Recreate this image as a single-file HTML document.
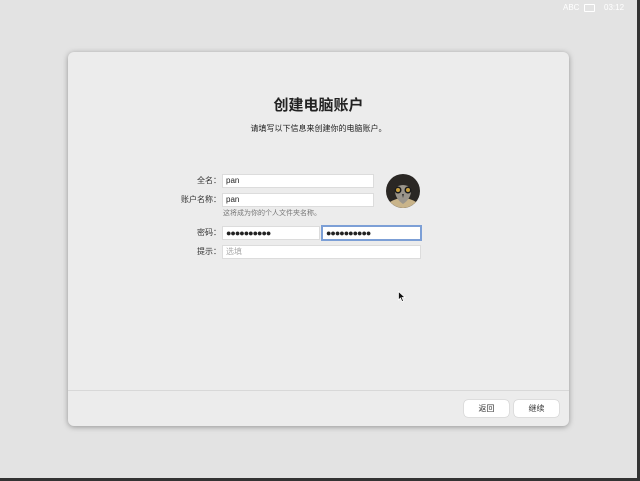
<!DOCTYPE html>
<html><head><meta charset="utf-8"><style>
body{margin:0;width:640px;height:481px;overflow:hidden;background:#e3e3e3;font-family:"Liberation Sans","Noto Sans CJK SC",sans-serif;position:relative}
.a{position:absolute}
.win{left:68px;top:52px;width:501px;height:374px;background:#ececec;border-radius:6px;box-shadow:0 1px 6px rgba(0,0,0,.35)}
.in{position:absolute;height:12px;background:#fff;box-shadow:0 0 0 1px #dcdcdc;font-size:8px;line-height:12px;padding-left:3px;box-sizing:border-box;color:#222}
.lb{position:absolute;font-size:8px;color:#333;text-align:right;width:60px;line-height:12px}
.dots{font-size:9px;letter-spacing:-1px;line-height:12px}
.btn{position:absolute;top:400px;width:45px;height:17px;background:#fff;border-radius:4px;box-shadow:0 0 1px rgba(0,0,0,.4);font-size:8px;text-align:center;line-height:17px;color:#333}
</style></head><body>
<div class="a" style="left:563px;top:3px;font-size:8px;color:#fff">ABC</div>
<div class="a" style="left:584px;top:4px;width:9px;height:6px;border:1px solid #fff;border-radius:1px"></div>
<div class="a" style="left:604px;top:3px;font-size:8px;color:#fff">03:12</div>
<div class="a" style="left:0;top:478px;width:640px;height:3px;background:#333"></div>
<div class="a" style="left:637px;top:0;width:3px;height:481px;background:#333"></div>
<div class="a win"></div>
<div class="a" style="left:68px;top:94px;width:501px;text-align:center;font-size:15px;font-weight:bold;color:#222">创建电脑账户</div>
<div class="a" style="left:68px;top:123px;width:501px;text-align:center;font-size:8px;color:#222">请填写以下信息来创建你的电脑账户。</div>
<div class="lb" style="left:161px;top:175px">全名：</div>
<div class="in" style="left:223px;top:175px;width:150px">pan</div>
<div class="lb" style="left:161px;top:194px">账户名称：</div>
<div class="in" style="left:223px;top:194px;width:150px">pan</div>
<div class="a" style="left:223px;top:208px;font-size:7px;color:#777">这将成为你的个人文件夹名称。</div>
<div class="lb" style="left:161px;top:227px">密码：</div>
<div class="in dots" style="left:223px;top:227px;width:96px">●●●●●●●●●●</div>
<div class="in dots" style="left:323px;top:227px;width:97px;box-shadow:0 0 0 2px #7c9fd6">●●●●●●●●●●</div>
<div class="lb" style="left:161px;top:246px">提示：</div>
<div class="in" style="left:223px;top:246px;width:197px;color:#aaa">选填</div>
<svg class="a" style="left:386px;top:174px" width="34" height="34" viewBox="0 0 34 34">
<circle cx="17" cy="17" r="17" fill="#2a2724"/>
<path d="M4 28 Q17 20 30 28 Q24 34 17 34 Q10 34 4 28Z" fill="#c9b48a"/>
<path d="M9 14 Q17 8 25 14 Q26 24 17 30 Q8 24 9 14Z" fill="#9a958c"/>
<circle cx="12" cy="16" r="3.5" fill="#1a1a1a"/><circle cx="22" cy="16" r="3.5" fill="#1a1a1a"/>
<circle cx="12" cy="16" r="2" fill="#c8a040"/><circle cx="22" cy="16" r="2" fill="#c8a040"/>
<path d="M16 20 L18 20 L17 24Z" fill="#333"/>
</svg>
<svg class="a" style="left:398px;top:291px" width="8" height="12" viewBox="0 0 8 12"><path d="M0.5 0.5 L0.5 9 L2.5 7 L4 10.5 L5.5 10 L4 6.5 L7 6.5Z" fill="#111" stroke="#fff" stroke-width=".7"/></svg>
<div class="a" style="left:68px;top:390px;width:501px;height:1px;background:#d8d8d8"></div>
<div class="btn" style="left:464px">返回</div>
<div class="btn" style="left:514px">继续</div>
</body></html>
